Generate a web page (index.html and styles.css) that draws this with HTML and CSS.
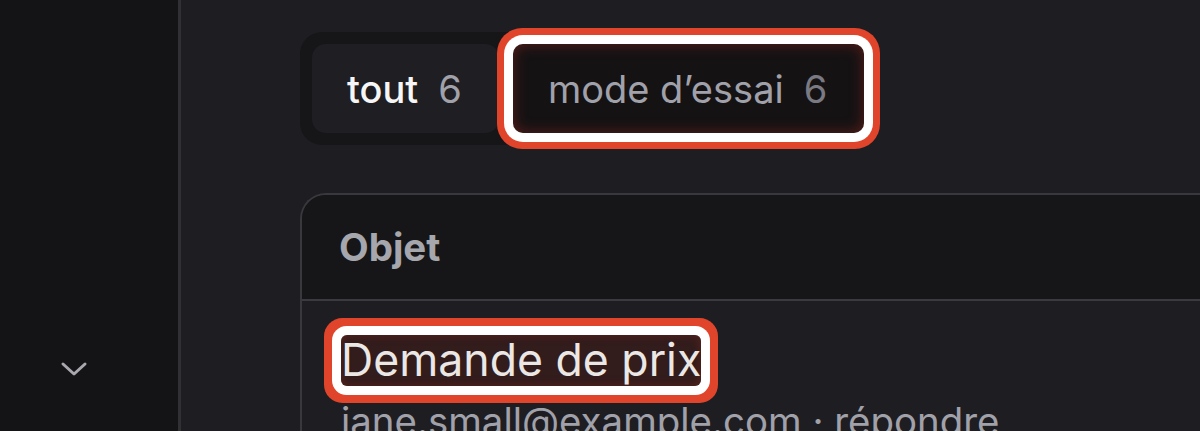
FILE: index.html
```html
<!DOCTYPE html>
<html lang="fr">
<head>
<meta charset="utf-8">
<title>Messages</title>
<link rel="stylesheet" href="styles.css">
</head>
<body>
  <aside class="sidebar">
    <button class="collapse" aria-label="Développer">
      <svg width="28" height="18" viewBox="0 0 28 18" fill="none" stroke="currentColor" stroke-width="3" stroke-linecap="round" stroke-linejoin="round"><path d="M3 4l11 10 11-10"/></svg>
    </button>
  </aside>
  <main class="main">
    <div class="segmented">
      <div class="tab tab-active"><span class="tab-label">tout</span><span class="tab-count">6</span></div>
      <div class="tab tab-marked"><span class="tab-label">mode d’essai</span><span class="tab-count">6</span></div>
    </div>
    <section class="card">
      <div class="card-head">Objet</div>
      <div class="row">
        <div class="row-title"><span class="mark">Demande de prix</span></div>
        <div class="row-sub">jane.small@example.com · répondre</div>
      </div>
    </section>
  </main>
</body>
</html>
```
FILE: styles.css
```css
* { box-sizing: border-box; }
html, body { height: 100%; }
body {
  margin: 0;
  display: flex;
  background: #1e1d22;
  font-family: Inter, "Noto Sans", "Liberation Sans", sans-serif;
  overflow: hidden;
}
.sidebar {
  width: 181px;
  flex: none;
  background: #141416;
  border-right: 3px solid #303035;
  display: flex;
  flex-direction: column;
  justify-content: flex-end;
  align-items: flex-start;
  padding: 0 0 53px 60px;
}
.collapse {
  background: none;
  border: 0;
  padding: 0;
  color: #a8a8ae;
  display: flex;
}
.main {
  flex: 1;
  min-width: 0;
  padding: 32px 0 0 119px;
  overflow: hidden;
}
.segmented {
  display: inline-flex;
  gap: 14px;
  padding: 12px;
  background: #161619;
  border-radius: 22px;
}
.tab {
  height: 89px;
  padding: 0 37px 0 35px;
  display: flex;
  align-items: center;
  gap: 20px;
  border-radius: 14px;
  font-size: 38px;
  color: #a1a1aa;
}
.tab-active {
  background: #1f1e23;
}
.tab-active .tab-label {
  color: #f6f6f7;
  font-weight: 500;
}
.tab-active .tab-count { color: #a1a1aa; }
.tab-marked {
  background: #151214;
  border-radius: 10px;
  box-shadow: inset 0 0 14px rgba(150, 40, 28, 0.55), 0 0 0 9px #ffffff, 0 0 0 16px #e0452b;
}
.tab-marked .tab-count { color: #7a7a82; }
.card {
  margin-top: 48px;
  margin-right: -40px;
  border: 2px solid #38383d;
  border-right: 0;
  border-bottom: 0;
  border-radius: 26px 0 0 0;
}
.card-head {
  height: 106px;
  display: flex;
  align-items: center;
  padding-left: 37px;
  background: #161618;
  border-bottom: 2px solid #3a3a3f;
  border-radius: 24px 0 0 0;
  font-size: 38.5px;
  font-weight: 700;
  color: #a6a6ad;
}
.row {
  padding: 34px 39px;
}
.row-title {
  font-size: 44.6px;
  line-height: 51px;
  color: #ebe7e4;
}
.mark {
  display: inline-block;
  background: #321c1c;
  border-radius: 6px;
  box-shadow: inset 0 0 10px rgba(120, 40, 30, 0.6), 0 0 0 9px #ffffff, 0 0 0 17px #e0452b;
}
.row-sub {
  margin-top: 12px;
  font-size: 38.4px;
  line-height: 46px;
  color: #a1a1aa;
}
```
